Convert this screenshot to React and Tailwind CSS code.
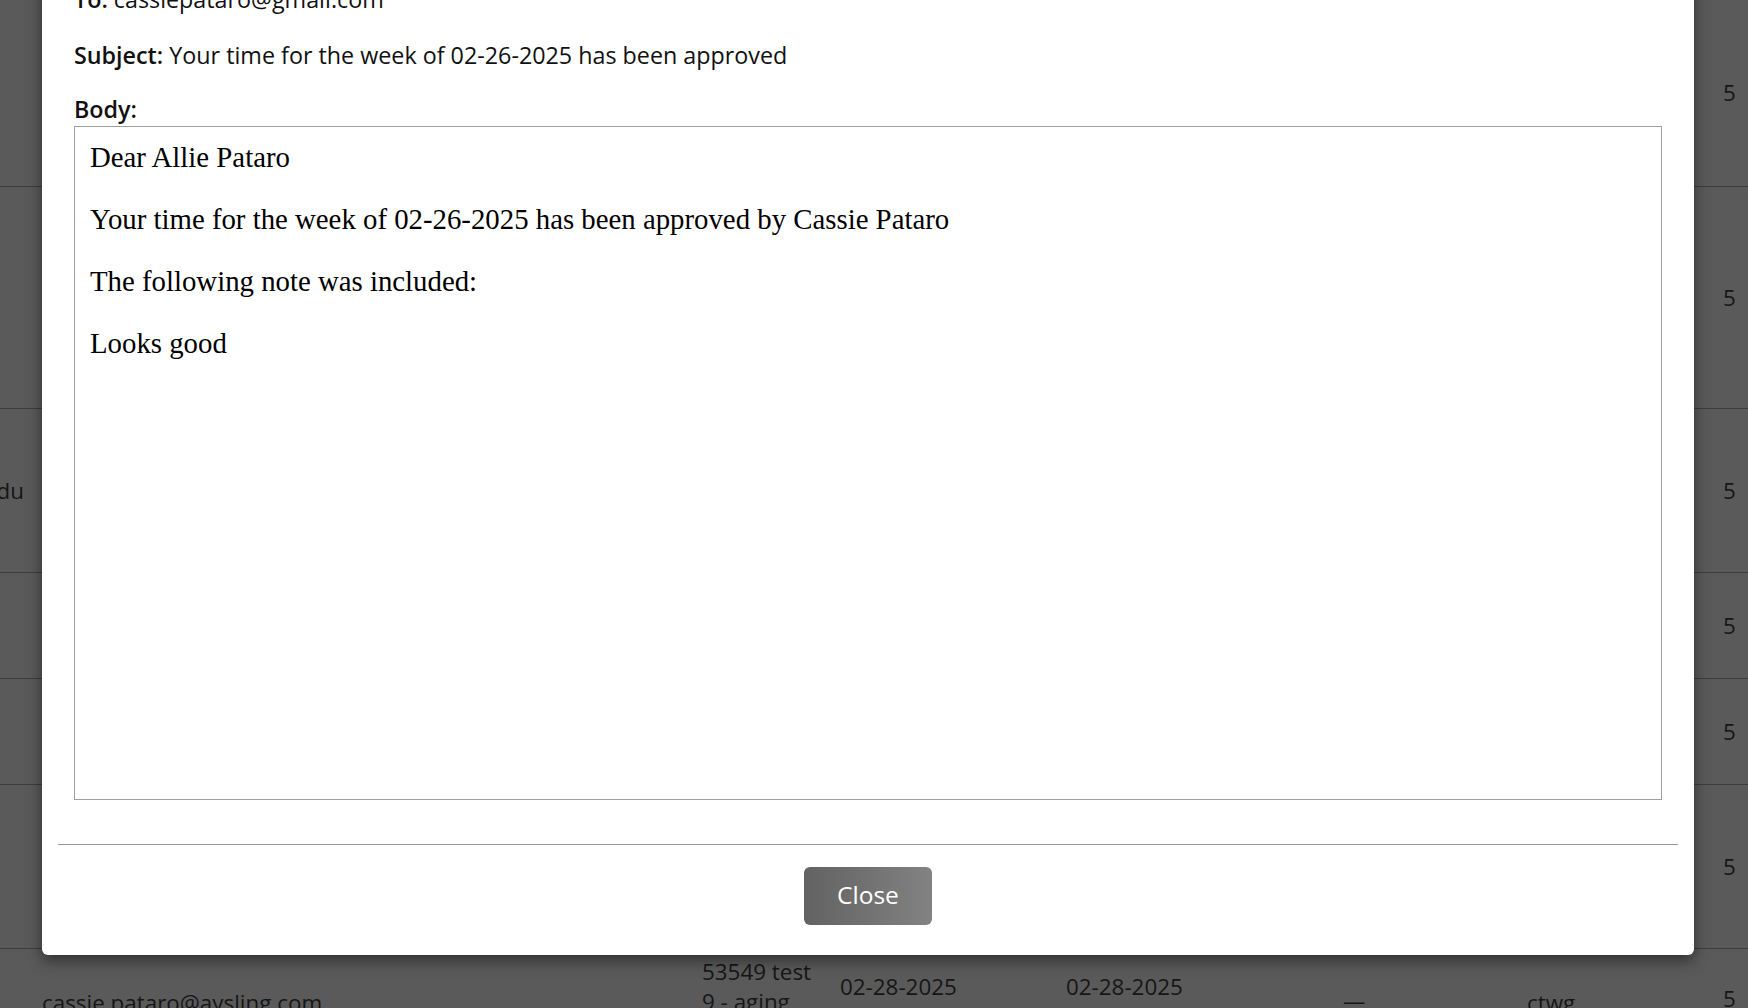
import React from "react";

const rows = [
  { h: "h-[186px]", left: "" },
  { h: "h-[222px]", left: "" },
  { h: "h-[164px]", left: "edu" },
  { h: "h-[106px]", left: "" },
  { h: "h-[106px]", left: "" },
  { h: "h-[164px]", left: "" },
];

const Backdrop = () => {
  return (
    <div className="w-full text-[22.4px] leading-[30px] text-[#161616]">
      {rows.map((row, i) => (
        <div
          key={i}
          className={`${row.h} flex items-center ${i > 0 ? "border-t border-[#3d3d3d]" : ""}`}
        >
          <div className="w-[24px] flex justify-end overflow-hidden">
            <span className="shrink-0 whitespace-nowrap">{row.left}</span>
          </div>
          <div className="flex-1" />
          <div className="w-[25px]">5</div>
        </div>
      ))}
      <div className="h-[110px] flex items-start border-t border-[#3d3d3d]">
        <div className="w-[42px]" />
        <div className="w-[660px] pt-[39px]">cassie.pataro@aysling.com</div>
        <div className="w-[138px] pt-[8px]">
          <div>53549 test</div>
          <div>9 - aging</div>
        </div>
        <div className="w-[226px] pt-[23px]">02-28-2025</div>
        <div className="w-[277px] pt-[23px]">02-28-2025</div>
        <div className="w-[184px] pt-[37px]">—</div>
        <div className="w-[196px] pt-[39px]">ctwg</div>
        <div className="pt-[35px]">5</div>
      </div>
    </div>
  );
};

const EmailPreview = () => {
  return (
    <div className="absolute left-[42px] top-[-40px] w-[1652px] rounded-[6px] bg-white shadow-[0_5px_15px_rgba(0,0,0,0.5)] px-[32px] pt-[23px] pb-[30px] text-[#111] text-[23.3px] leading-[32px]">
      <p>
        <span className="font-semibold">To:</span> cassiepataro@gmail.com
      </p>
      <p className="mt-[24px]">
        <span className="font-semibold">Subject:</span> Your time for the week of 02-26-2025 has been approved
      </p>
      <p className="mt-[22px] font-semibold">Body:</p>
      <div className="mt-[1px] h-[674px] border border-[#a0a0a0] pt-[14px] pl-[15px] font-['Liberation_Serif',serif] text-[28.8px] leading-[32px] text-black">
        <p className="mb-[30px]">Dear Allie Pataro</p>
        <p className="mb-[30px]">Your time for the week of 02-26-2025 has been approved by Cassie Pataro</p>
        <p className="mb-[30px]">The following note was included:</p>
        <p>Looks good</p>
      </div>
      <div className="mt-[44px] -mx-[16px] h-px bg-[#9a9a9a]" />
      <div className="mt-[22px] flex justify-center">
        <button className="w-[128px] h-[58px] rounded-[6px] bg-linear-to-r from-[#626262] to-[#828282] text-white text-[24.5px] flex items-center justify-center pb-[3px]">
          Close
        </button>
      </div>
    </div>
  );
};

export default function App() {
  return (
    <div className="relative w-full h-[1008px] overflow-hidden bg-[#5a5a5a] font-['Open_Sans',sans-serif]">
      <Backdrop />
      <EmailPreview />
    </div>
  );
}
